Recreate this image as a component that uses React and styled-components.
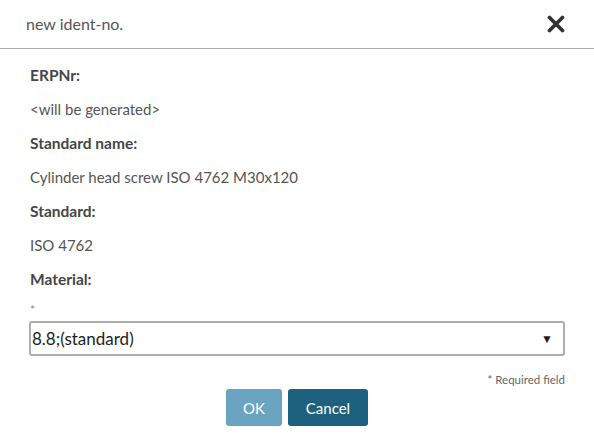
import styled, { createGlobalStyle } from "styled-components";

const GlobalStyle = createGlobalStyle`
  html, body {
    margin: 0;
    padding: 0;
    background: #ffffff;
  }
  body {
    font-family: Lato, "Noto Sans", sans-serif;
    color: #555555;
  }
`;

const Dialog = styled.div`
  width: 594px;
  height: 444px;
  background: #ffffff;
  display: flex;
  flex-direction: column;
`;

const Header = styled.div`
  box-sizing: border-box;
  height: 49px;
  display: flex;
  align-items: center;
  justify-content: space-between;
  padding: 0 28px 1px 26px;
  border-bottom: 1px solid #a7adb0;
`;

const Title = styled.h1`
  margin: 0;
  font-size: 16px;
  font-weight: 400;
  color: #555555;
`;

const CloseButton = styled.button`
  border: none;
  background: none;
  padding: 0;
  width: 20px;
  height: 20px;
  display: flex;
  align-items: center;
  justify-content: center;
  cursor: pointer;
`;

const Body = styled.div`
  padding: 16px 29px 0 29px;
  display: flex;
  flex-direction: column;
`;

const Label = styled.div`
  font-size: 15.5px;
  font-weight: 700;
  color: #464646;
  line-height: 20px;
  padding-left: 1px;
  margin-bottom: 14px;
`;

const Value = styled.div`
  font-size: 15px;
  color: #555555;
  line-height: 20px;
  padding-left: 1px;
  margin-bottom: 14px;
`;

const Asterisk = styled.div`
  font-size: 12px;
  color: #8a8a8a;
  line-height: 14px;
  padding-left: 1px;
  margin-bottom: 4px;
`;

const SelectBox = styled.div`
  box-sizing: border-box;
  height: 35px;
  border: 2px solid #adadad;
  border-radius: 3px;
  display: flex;
  align-items: center;
  justify-content: space-between;
  padding: 0 10px 0 1px;
  font-size: 17px;
  color: #1e1e1e;
`;

const Caret = styled.span`
  font-size: 12px;
  color: #1e1e1e;
`;

const Note = styled.div`
  text-align: right;
  font-size: 11.5px;
  line-height: 14px;
  color: #666666;
  margin-top: 17px;
`;

const Actions = styled.div`
  display: flex;
  justify-content: center;
  gap: 6px;
  margin-top: 2px;
`;

const Button = styled.button`
  height: 37px;
  padding: 0 16px;
  border: none;
  border-radius: 3px;
  font-family: inherit;
  font-size: 15px;
  color: #ffffff;
  background: ${(props) => (props.$primary ? "#6ba4c1" : "#1e617e")};
  min-width: ${(props) => (props.$primary ? "56px" : "80px")};
  cursor: pointer;
`;

function CloseIcon() {
  return (
    <svg width="18" height="18" viewBox="0 0 18 18">
      <path
        d="M2.5 2.5 L15.5 15.5 M15.5 2.5 L2.5 15.5"
        stroke="#333333"
        strokeWidth="3.8"
        strokeLinecap="round"
      />
    </svg>
  );
}

function App() {
  return (
    <>
      <GlobalStyle />
      <Dialog>
        <Header>
          <Title>new ident-no.</Title>
          <CloseButton aria-label="close">
            <CloseIcon />
          </CloseButton>
        </Header>
        <Body>
          <Label>ERPNr:</Label>
          <Value>&lt;will be generated&gt;</Value>
          <Label>Standard name:</Label>
          <Value>Cylinder head screw ISO 4762 M30x120</Value>
          <Label>Standard:</Label>
          <Value>ISO 4762</Value>
          <Label>Material:</Label>
          <Asterisk>*</Asterisk>
          <SelectBox>
            <span>8.8;(standard)</span>
            <Caret>▼</Caret>
          </SelectBox>
          <Note>* Required field</Note>
          <Actions>
            <Button $primary>OK</Button>
            <Button>Cancel</Button>
          </Actions>
        </Body>
      </Dialog>
    </>
  );
}

export default App;
